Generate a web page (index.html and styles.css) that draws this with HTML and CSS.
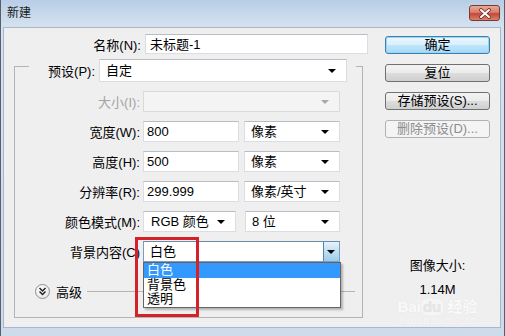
FILE: index.html
```html
<!DOCTYPE html>
<html lang="zh-CN">
<head>
    <meta charset="UTF-8">
    <title>新建</title>
    <link rel="stylesheet" href="styles.css">
</head>
<body>
    <div class="window">
        <div class="titlebar">
            <span class="title">新建</span>
            <span class="close">
                <svg width="14" height="11" viewBox="0 0 14 11">
                    <path d="M3 2 L11 9 M11 2 L3 9" stroke="#6e2a22" stroke-width="3.6" stroke-linecap="round"/>
                    <path d="M3 2 L11 9 M11 2 L3 9" stroke="#ffffff" stroke-width="2" stroke-linecap="round"/>
                </svg>
            </span>
        </div>
        <div class="body">
            <div class="left">
                <div class="name-row">
                    <label class="name-lbl">名称(N):</label>
                    <div class="field name-input">未标题-1</div>
                </div>

                <div class="group">
                    <div class="group-head">
                        <span class="head-inner">
                            <label class="head-lbl">预设(P):</label>
                            <div class="field select preset">自定<span class="arrow"></span></div>
                        </span>
                    </div>

                    <div class="row">
                        <label class="lbl disabled">大小(I):</label>
                        <div class="field select full off"><span class="arrow"></span></div>
                    </div>
                    <div class="row">
                        <label class="lbl">宽度(W):</label>
                        <div class="field num">800</div>
                        <div class="field select unit">像素<span class="arrow"></span></div>
                    </div>
                    <div class="row">
                        <label class="lbl">高度(H):</label>
                        <div class="field num">500</div>
                        <div class="field select unit">像素<span class="arrow"></span></div>
                    </div>
                    <div class="row">
                        <label class="lbl">分辨率(R):</label>
                        <div class="field num">299.999</div>
                        <div class="field select unit">像素/英寸<span class="arrow"></span></div>
                    </div>
                    <div class="row">
                        <label class="lbl">颜色模式(M):</label>
                        <div class="field select mode">RGB 颜色<span class="arrow"></span></div>
                        <div class="field select depth">8 位<span class="arrow"></span></div>
                    </div>
                    <div class="row">
                        <label class="lbl">背景内容(C)</label>
                        <div class="field select full open">白色
                            <span class="drop-btn"><span class="arrow"></span></span>
                            <ul class="droplist">
                                <li class="sel">白色</li>
                                <li>背景色</li>
                                <li>透明</li>
                            </ul>
                            <span class="mark"></span>
                        </div>
                    </div>

                    <div class="adv-row">
                        <span class="adv-btn">
                            <svg width="9" height="9" viewBox="0 0 9 9">
                                <path d="M1.5 1 L4.5 4 L7.5 1 M1.5 4.5 L4.5 7.5 L7.5 4.5" fill="none" stroke="#222" stroke-width="1.5"/>
                            </svg>
                        </span>
                        <span class="adv-lbl">高级</span>
                        <span class="adv-line"></span>
                    </div>
                </div>
            </div>

            <div class="right">
                <button class="btn default">确定</button>
                <button class="btn">复位</button>
                <button class="btn">存储预设(S)...</button>
                <button class="btn" disabled>删除预设(D)...</button>

                <div class="info">
                    <div class="info-title">图像大小:</div>
                    <div class="info-size">1.14M</div>
                    <div class="watermark">Bai<b>du</b> 经验</div>
                    <div class="watermark small">jingyan.baidu.com</div>
                </div>
            </div>
        </div>
    </div>
</body>
</html>
```

FILE: styles.css
```css
* {
    box-sizing: border-box;
}

body {
    margin: 0;
    font-family: "Liberation Sans", "Noto Sans CJK SC", sans-serif;
    font-size: 13px;
    color: #000;
}

.window {
    width: 505px;
    height: 336px;
    background: linear-gradient(#b8cee6, #d5e2ef 27px, #cddbea 100%);
    border-left: 1px solid #55606c;
    border-right: 1px solid #55606c;
    overflow: hidden;
}

.titlebar {
    height: 27px;
    display: flex;
    justify-content: space-between;
    align-items: flex-start;
    padding: 0 4px 0 6px;
}

.title {
    font-size: 12px;
    line-height: 27px;
    color: #1a1a1a;
}

.close {
    margin-top: 5px;
    width: 31px;
    height: 16px;
    border: 1px solid #7a3a30;
    border-radius: 3px;
    background: linear-gradient(#eaa998, #d7806c 45%, #c4473a 55%, #d9826a);
    display: flex;
    align-items: center;
    justify-content: center;
}

.body {
    margin: 0 3px 0 2px;
    height: 301px;
    background: #f0eff0;
    border: 1px solid #a8b8ca;
    display: flex;
}

.left {
    width: 381px;
    padding-top: 6px;
}

.name-row {
    display: flex;
    align-items: center;
    height: 20px;
}

.name-lbl {
    width: 137px;
    margin-right: 4px;
    text-align: right;
}

.field {
    height: 21px;
    line-height: 19px;
    background: #fff;
    border: 1px solid #dcdde3;
    border-top-color: #b9bcc2;
    padding-left: 5px;
    white-space: nowrap;
}

.name-input {
    width: 223px;
    height: 20px;
    padding-left: 4px;
}

.select {
    position: relative;
    padding-left: 6px;
}

.arrow {
    position: absolute;
    right: 10px;
    top: 8px;
    width: 0;
    height: 0;
    border-left: 4px solid transparent;
    border-right: 4px solid transparent;
    border-top: 4px solid #000;
}

.group {
    margin: 12px 0 0 10px;
    width: 349px;
    border: 1px solid #b4b4b4;
    padding: 0 0 18px 0;
}

.group-head {
    margin: -8px 0 0 14px;
    display: flex;
}

.head-inner {
    display: flex;
    align-items: center;
    background: #f0eff0;
    padding-right: 9px;
}

.head-lbl {
    width: 66px;
    margin-right: 4px;
    text-align: right;
}

.preset {
    width: 248px;
    height: 23px;
    line-height: 21px;
}

.preset .arrow {
    top: 9px;
}

.row {
    display: flex;
    align-items: center;
    height: 21px;
    margin-top: 9px;
}

.lbl {
    width: 125px;
    margin-right: 3px;
    text-align: right;
}

.disabled {
    color: #a3a3a3;
}

.num {
    width: 96px;
    padding-left: 3px;
}

.unit {
    width: 96px;
    margin-left: 5px;
}

.mode {
    width: 93px;
    padding-left: 7px;
}

.depth {
    width: 95px;
    margin-left: 9px;
}

.full {
    width: 197px;
}

.off {
    background: #f4f4f4;
    border-color: #dadada;
}

.off .arrow {
    border-top-color: #a8a8a8;
}

.open {
    border-color: #7e9db9;
    border-top-color: #6a8aa8;
}

.drop-btn {
    position: absolute;
    top: 0;
    right: 0;
    width: 16px;
    height: 19px;
    border-left: 1px solid #4f86b2;
    background: linear-gradient(#e6f3fb, #bfdff1 50%, #9ccbea);
}

.drop-btn .arrow {
    right: 4px;
    top: 8px;
}

.droplist {
    position: absolute;
    top: 20px;
    left: -1px;
    width: 198px;
    margin: 0;
    padding: 0;
    list-style: none;
    background: #fff;
    border: 1px solid #646464;
    box-shadow: 2px 2px 2px rgba(0, 0, 0, 0.25);
    z-index: 2;
}

.droplist li {
    height: 14.5px;
    line-height: 14.5px;
    padding-left: 3px;
}

.droplist .sel {
    background: #3399ff;
    color: #fff;
}

.mark {
    position: absolute;
    left: -9px;
    top: -5px;
    width: 64px;
    height: 80px;
    border: 3px solid #d3222a;
    z-index: 3;
}

.adv-row {
    display: flex;
    align-items: center;
    height: 15px;
    margin: 22px 7px 0 20px;
}

.adv-btn {
    width: 15px;
    height: 15px;
    border: 1px solid #8e8e8e;
    border-radius: 50%;
    background: radial-gradient(circle at 40% 35%, #ffffff, #e2e2e2);
    display: flex;
    align-items: center;
    justify-content: center;
}

.adv-lbl {
    margin: 0 5px 0 6px;
}

.adv-line {
    flex: 1;
    border-top: 1px solid #b4b4b4;
}

.right {
    width: 105px;
    padding-top: 8px;
    display: flex;
    flex-direction: column;
}

.btn {
    height: 18px;
    margin-bottom: 10px;
    padding: 0;
    font: inherit;
    font-size: 13px;
    line-height: 16px;
    color: #000;
    border: 1px solid #707070;
    border-radius: 3px;
    background: linear-gradient(#f3f3f3, #ebebeb 48%, #dcdcdc 52%, #d0d0d0);
}

.btn.default {
    border-color: #3c7fb1;
    background: linear-gradient(#eaf6fd, #d9f0fc 48%, #bee6fd 52%, #a7d9f5);
    box-shadow: inset 0 0 0 1px #9ad6f4;
}

.btn:disabled {
    color: #8d8d8d;
    border-color: #adb2b5;
    background: #f4f4f4;
}

.info {
    margin-top: 109px;
    text-align: center;
}

.info-title {
    line-height: 18px;
}

.info-size {
    margin-top: 6px;
    line-height: 18px;
}

.watermark {
    color: #fafafa;
    font-size: 15px;
    font-weight: bold;
    line-height: 16px;
    white-space: nowrap;
    text-shadow: 0 0 1px #dcdcdc;
}

.watermark b {
    display: inline-block;
    background: #f6f6f6;
    border-radius: 7px;
    padding: 0 2px;
    color: #e6e6e6;
}

.watermark.small {
    font-size: 10px;
    font-weight: normal;
    line-height: 12px;
}
```
